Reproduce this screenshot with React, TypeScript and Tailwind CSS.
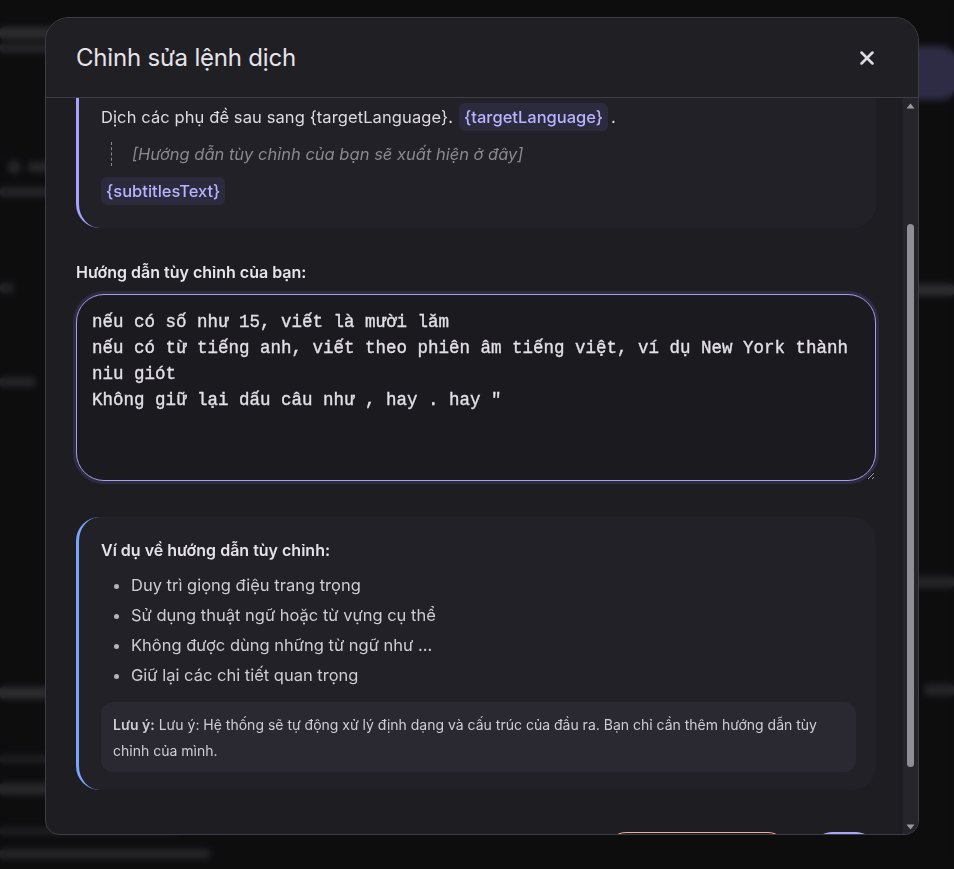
import { X } from "lucide-react";

const PROMPT_VAR = "{targetLanguage}";

const INSTRUCTIONS = `nếu có số như 15, viết là mười lăm
nếu có từ tiếng anh, viết theo phiên âm tiếng việt, ví dụ New York thành niu giót
Không giữ lại dấu câu như , hay . hay "`;

const EXAMPLES = [
  "Duy trì giọng điệu trang trọng",
  "Sử dụng thuật ngữ hoặc từ vựng cụ thể",
  "Không được dùng những từ ngữ như ...",
  "Giữ lại các chi tiết quan trọng",
];

function Chip({ children }: { children: string }) {
  return (
    <span className="flex h-7 items-center rounded-md bg-[#2c2a3d] px-[5px] font-medium text-[#b8b4ff]">
      {children}
    </span>
  );
}

function ScrollArrow({ up }: { up?: boolean }) {
  return (
    <div className="flex h-[15px] items-center justify-center">
      <svg width="9" height="6" viewBox="0 0 9 6">
        <path d={up ? "M4.5 0.5L8.5 5.5H0.5Z" : "M0.5 0.5H8.5L4.5 5.5Z"} fill="#9b99a1" />
      </svg>
    </div>
  );
}

// the page behind the dialog, only its edges show through the backdrop
function BackgroundPage() {
  return (
    <div className="flex h-full justify-between text-[#9a98a0]">
      <div className="flex w-[280px] flex-col pt-[27px] text-[14px]">
        <div className="h-3 w-[240px] rounded bg-[#8c8a92]" />
        <div className="mt-[4px] h-2.5 w-[200px] rounded bg-[#6e6c74]" />
        <div className="mt-[108px] flex items-center gap-2 pl-2">
          <div className="h-3 w-3 rotate-45 rounded-sm bg-[#7a7880]" />
          <div className="h-2.5 w-[160px] rounded bg-[#7a7880]" />
        </div>
        <div className="mt-[14px] h-2.5 w-[230px] rounded bg-[#6e6c74]" />
        <div className="mt-[86px] h-2.5 w-[14px] rounded bg-[#6e6c74]" />
        <div className="mt-[84px] h-2.5 w-[36px] rounded bg-[#6e6c74]" />
        <div className="mt-[300px] h-3 w-[250px] rounded bg-[#8c8a92]" />
        <div className="mt-[56px] h-2 w-[120px] rounded bg-[#55535a]" />
        <div className="mt-[20px] h-3 w-[220px] rounded bg-[#7a7880]" />
        <div className="mt-[32px] h-2 w-[180px] rounded bg-[#55535a]" />
        <div className="mt-[14px] h-2.5 w-[210px] rounded bg-[#6e6c74]" />
      </div>
      <div className="flex w-[220px] flex-col items-end pt-[46px]">
        <div className="h-[54px] w-[200px] rounded-xl bg-[#8f8ce6]" />
        <div className="mt-[184px] h-3 w-[150px] rounded bg-[#8c8a92]" />
        <div className="mt-[280px] h-3 w-[40px] rounded bg-[#6e6c74]" />
        <div className="mt-[96px] h-3 w-[30px] rounded bg-[#6e6c74]" />
      </div>
    </div>
  );
}

export default function App() {
  return (
    <div className="relative h-screen w-full overflow-hidden bg-[#101013] font-['Inter',sans-serif]">
      <BackgroundPage />
      <div className="absolute inset-0 bg-[#0c0c0e]/75 backdrop-blur-[3px]" />

      <div className="absolute left-[45px] top-[17px] flex h-[818px] w-[874px] flex-col overflow-hidden rounded-t-[24px] rounded-b-[14px] border border-[#3e3d44] bg-[#1e1d22]">
        <div className="flex h-[80px] shrink-0 items-center justify-between border-b border-[#3e3d44] bg-[#201f24] pl-[30px] pr-[40px]">
          <h2 className="text-[24px] font-normal tracking-[-0.2px] text-[#e6e3ea]">Chỉnh sửa lệnh dịch</h2>
          <button className="text-[#dedae3]">
            <X size={22} strokeWidth={2.8} />
          </button>
        </div>

        <div className="flex min-h-0 flex-1">
          <div
            className="min-w-0 flex-1 overflow-hidden pb-8 pl-[30px] pr-[27px] pt-6"
            ref={(el) => {
              if (el) el.scrollTop = 151;
            }}
          >
            {/* current prompt preview */}
            <div className="rounded-3xl border-l-[3px] border-[#a6a2ff] bg-[#222127] pb-[23px] pl-[22px] pr-5 pt-6 text-[16.5px] text-[#dedbe3]">
              <div className="h-6 text-[16px] font-semibold leading-6">Xem trước lệnh dịch:</div>
              <div className="mt-3 h-[22px] text-[14px] leading-[22px] text-[#8d8a93]">
                Lệnh dưới đây sẽ được gửi đến mô hình khi dịch phụ đề.
              </div>
              <div className="mt-[11px] flex flex-col gap-[11px]">
                <div className="flex h-7 items-center">Bạn là một dịch giả phụ đề chuyên nghiệp.</div>
                <div className="flex h-7 items-center">
                  <span className="tracking-[0.1px]">Dịch các phụ đề sau sang {PROMPT_VAR}.</span>
                  <span className="ml-[6px]">
                    <Chip>{PROMPT_VAR}</Chip>
                  </span>
                  <span className="ml-[3px]">.</span>
                </div>
                <div className="ml-[10px] flex h-6 items-center border-l border-dashed border-[#8b8891] pl-[20px] italic text-[#8b8891]">
                  [Hướng dẫn tùy chỉnh của bạn sẽ xuất hiện ở đây]
                </div>
                <div className="flex h-7 items-center">
                  <Chip>{"{subtitlesText}"}</Chip>
                </div>
              </div>
            </div>

            <label className="mb-[10px] mt-8 block h-6 text-[16px] font-semibold leading-6 text-[#e7e4eb]">
              Hướng dẫn tùy chỉnh của bạn:
            </label>
            <textarea
              defaultValue={INSTRUCTIONS}
              ref={(el) => {
                if (el) {
                  el.focus({ preventScroll: true });
                  el.setSelectionRange(el.value.length, el.value.length);
                }
              }}
              className="block h-[187px] w-full rounded-[28px] border border-[#a29df5] bg-[#1b1a1f] px-[15px] pt-[14px] font-['Liberation_Mono',monospace] text-[17.5px] leading-[26px] text-[#e2dfe6] caret-[#e2dfe6] shadow-[0_0_0_3px_rgba(140,134,230,0.14)] outline-none [-webkit-text-stroke:0.35px_#e2dfe6] [color-scheme:dark]"
            />

            {/* examples */}
            <div className="mt-9 rounded-3xl border-l-[3px] border-[#78a6ff] bg-[#222127] pb-[18px] pl-[22px] pr-5 pt-[21px]">
              <div className="h-6 text-[16px] font-semibold leading-6 text-[#e4e1e8]">Ví dụ về hướng dẫn tùy chỉnh:</div>
              <ul className="mt-2 list-disc pl-[30px] text-[16.5px] leading-[30px] text-[#cfccd4] marker:text-[#b5b2bb]">
                {EXAMPLES.map((ex) => (
                  <li key={ex}>{ex}</li>
                ))}
              </ul>
              <div className="mt-3 rounded-xl bg-[#2a2932] px-3 pb-2 pt-[10px] text-[14px] leading-[26px] text-[#cfccd4]">
                <span className="font-semibold">Lưu ý:</span> Lưu ý: Hệ thống sẽ tự động xử lý định dạng và cấu trúc của
                đầu ra. Bạn chỉ cần thêm hướng dẫn tùy chỉnh của mình.
              </div>
            </div>

            <div className="mt-[42px] flex justify-end gap-6">
              <button className="h-10 w-[182px] rounded-full border border-[#f1aba1] text-[14px] font-medium text-[#f1aba1]">
                Khôi phục mặc định
              </button>
              <button className="h-10 w-[64px] rounded-full bg-[#a9a6ff] text-[14px] font-medium text-[#1c1a36]">
                Lưu
              </button>
            </div>
          </div>

          {/* scrollbar */}
          <div className="flex w-[15px] shrink-0 flex-col bg-[#26252b]">
            <ScrollArrow up />
            <div className="flex-1">
              <div className="mx-auto mt-[111px] h-[543px] w-[7px] rounded-full bg-[#8f8d95]" />
            </div>
            <ScrollArrow />
          </div>
        </div>
      </div>
    </div>
  );
}
